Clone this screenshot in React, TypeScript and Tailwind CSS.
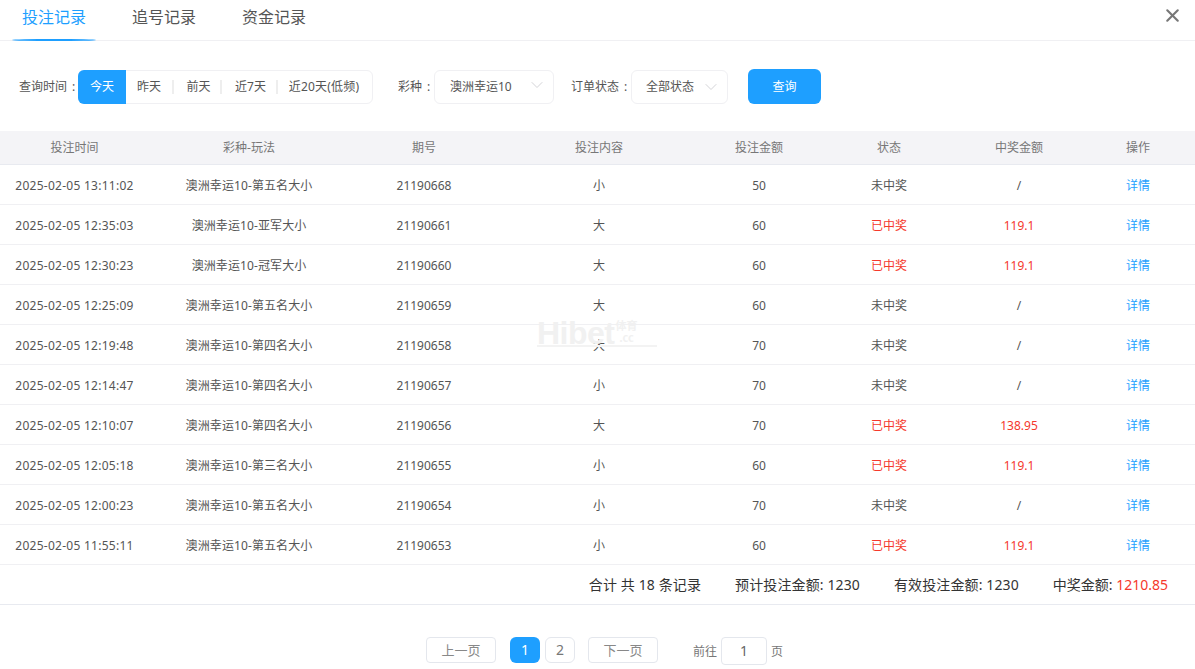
import React from 'react';
import { X, ChevronDown } from 'lucide-react';

const COLS = 'grid grid-cols-[149px_200px_150px_200px_120px_140px_120px_118px] items-center text-center';

const HEADERS = ['投注时间', '彩种-玩法', '期号', '投注内容', '投注金额', '状态', '中奖金额', '操作'];

const ROWS = [
  { time: '2025-02-05 13:11:02', game: '澳洲幸运10-第五名大小', issue: '21190668', content: '小', amount: 50, won: false, prize: '/' },
  { time: '2025-02-05 12:35:03', game: '澳洲幸运10-亚军大小', issue: '21190661', content: '大', amount: 60, won: true, prize: '119.1' },
  { time: '2025-02-05 12:30:23', game: '澳洲幸运10-冠军大小', issue: '21190660', content: '大', amount: 60, won: true, prize: '119.1' },
  { time: '2025-02-05 12:25:09', game: '澳洲幸运10-第五名大小', issue: '21190659', content: '大', amount: 60, won: false, prize: '/' },
  { time: '2025-02-05 12:19:48', game: '澳洲幸运10-第四名大小', issue: '21190658', content: '大', amount: 70, won: false, prize: '/' },
  { time: '2025-02-05 12:14:47', game: '澳洲幸运10-第四名大小', issue: '21190657', content: '小', amount: 70, won: false, prize: '/' },
  { time: '2025-02-05 12:10:07', game: '澳洲幸运10-第四名大小', issue: '21190656', content: '大', amount: 70, won: true, prize: '138.95' },
  { time: '2025-02-05 12:05:18', game: '澳洲幸运10-第三名大小', issue: '21190655', content: '小', amount: 60, won: true, prize: '119.1' },
  { time: '2025-02-05 12:00:23', game: '澳洲幸运10-第五名大小', issue: '21190654', content: '小', amount: 70, won: false, prize: '/' },
  { time: '2025-02-05 11:55:11', game: '澳洲幸运10-第五名大小', issue: '21190653', content: '小', amount: 60, won: true, prize: '119.1' },
];

const RANGES = ['昨天', '前天', '近7天', '近20天(低频)'];

const App: React.FC = () => {
  return (
    <div className="relative h-[669px] w-[1195px] overflow-hidden bg-white font-['Noto_Sans','Noto_Sans_CJK_SC',sans-serif] text-xs text-[#555]">
      {/* Tabs */}
      <div className="relative flex h-[41px] items-start gap-[46px] border-b border-[#f0f0f3] pl-[22px] pt-[4px] text-base leading-[26px]">
        <div className="relative text-[#1e9fff]">
          投注记录
          <span className="absolute -bottom-[11px] -left-[10px] -right-[10px] h-[2px] rounded-[50%] bg-[#1e9fff]" />
        </div>
        <div className="text-[#555]">追号记录</div>
        <div className="text-[#555]">资金记录</div>
        <X className="absolute right-[12px] top-[5px] h-[21px] w-[21px] text-[#777]" strokeWidth={2.4} />
      </div>

      {/* Filters */}
      <div className="flex h-[90px] items-center pl-[19px] pt-[1px]">
        <span className="w-[59px] whitespace-nowrap [word-spacing:2px]">查询时间 :</span>
        <div className="flex h-[34px] w-[295px] items-center rounded-md border border-[#f0f0f3]">
          <div className="-my-px -ml-px flex h-[34px] w-[48px] items-center justify-center rounded-l-md bg-[#1e9fff] text-white">今天</div>
          {RANGES.map((r, i) => (
            <div
              key={r}
              className={`flex h-[14px] items-center justify-center ${i < 3 ? 'border-r-2 border-[#eee]' : ''} ${['w-[48px]', 'w-[48px]', 'w-[56px]', 'w-[94px]'][i]} ${i === 1 || i === 2 ? 'pl-[3px]' : ''} ${i === 3 ? 'pr-[2px] tracking-[0.2px]' : ''}`}
            >
              {r}
            </div>
          ))}
        </div>
        <span className="ml-[25px] w-[36px] whitespace-nowrap [word-spacing:2px]">彩种 :</span>
        <div className="flex h-[34px] w-[120px] items-center justify-between rounded-md border border-[#f0f0f3] pl-[15px] pr-[6px]">
          澳洲幸运10
          <ChevronDown className="-mt-[4px] h-[20px] w-[20px] text-[#d4d4d8]" strokeWidth={1.2} />
        </div>
        <span className="ml-[17px] w-[60px] whitespace-nowrap [word-spacing:2px]">订单状态 :</span>
        <div className="flex h-[34px] w-[97px] items-center justify-between rounded-md border border-[#f0f0f3] pl-[14px] pr-[6px]">
          全部状态
          <ChevronDown className="h-[20px] w-[20px] text-[#d4d4d8]" strokeWidth={1.2} />
        </div>
        <button className="ml-[20px] h-[35px] w-[73px] rounded-md bg-[#1e9fff] text-xs text-white">查询</button>
      </div>

      {/* Table */}
      <div className={`${COLS} h-[34px] border-b border-[#e8eaf0] bg-[#f4f4f7] text-[#777]`}>
        {HEADERS.map((h) => (
          <div key={h}>{h}</div>
        ))}
      </div>
      {ROWS.map((row) => (
        <div key={row.issue} className={`${COLS} h-[40px] border-b border-[#f0f0f3] pt-[2px]`}>
          <div className="tracking-[0.26px]">{row.time}</div>
          <div className="tracking-[0.1px]">{row.game}</div>
          <div>{row.issue}</div>
          <div>{row.content}</div>
          <div>{row.amount}</div>
          <div className={row.won ? 'text-[#f5382c]' : ''}>{row.won ? '已中奖' : '未中奖'}</div>
          <div className={row.won ? 'text-[#f5382c]' : ''}>{row.prize}</div>
          <div className="text-[#1e9fff]">详情</div>
        </div>
      ))}

      {/* Summary */}
      <div className="flex h-[40px] items-center justify-end gap-[34px] border-b border-[#e8eaf0] pr-[27px] text-sm text-[#333]">
        <span className="tracking-[0.12px]">合计 共 18 条记录</span>
        <span className="tracking-[0.12px]">预计投注金额: 1230</span>
        <span className="tracking-[0.12px]">有效投注金额: 1230</span>
        <span>
          中奖金额: <span className="text-[#f5382c]">1210.85</span>
        </span>
      </div>

      {/* Pagination */}
      <div className="mt-[32px] flex items-start pl-[426px] text-[#777]">
        <div className="flex h-[26px] w-[70px] items-center justify-center rounded border border-[#e4e7ed] pt-px text-[13px] text-[#888]">上一页</div>
        <div className="ml-[14px] flex h-[26px] w-[30px] items-center justify-center rounded-md bg-[#1e9fff] text-sm text-white">1</div>
        <div className="ml-[5px] flex h-[26px] w-[30px] items-center justify-center rounded-md border border-[#e4e7ed] text-sm">2</div>
        <div className="ml-[13px] flex h-[26px] w-[70px] items-center justify-center rounded border border-[#e4e7ed] pt-px text-[13px] text-[#888]">下一页</div>
        <div className="ml-[35px] flex h-[28px] items-center pt-px">前往</div>
        <div className="ml-[4px] flex h-[28px] w-[46px] items-center justify-center rounded border border-[#e4e7ed] text-sm text-[#666]">1</div>
        <div className="ml-[4px] flex h-[28px] items-center pt-px">页</div>
      </div>

      {/* Watermark */}
      <div className="pointer-events-none absolute left-[537px] top-[319px] flex h-[28px] w-[120px] select-none items-start border-b-2 border-[#f3f3f3] font-['Liberation_Sans',sans-serif] text-[#f1f1f1]">
        <span className="text-[32px] font-bold leading-[28px] tracking-[-0.5px]">Hibet</span>
        <span className="ml-[1px] flex flex-col text-center font-['Noto_Sans_CJK_SC',sans-serif] text-[11px] font-bold leading-[12px]">
          <span>体育</span>
          <span>.cc</span>
        </span>
      </div>
    </div>
  );
};

export default App;
